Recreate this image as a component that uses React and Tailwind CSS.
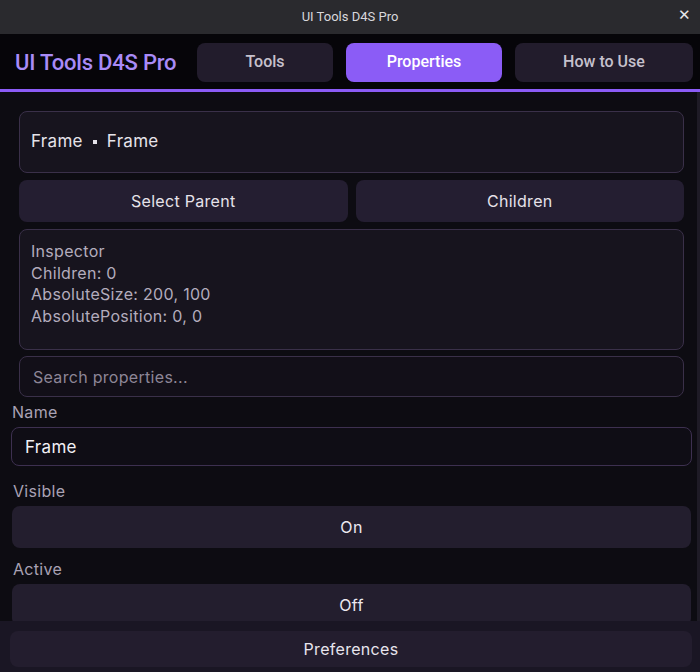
import React, { useState } from "react";

const tabs = ["Tools", "Properties", "How to Use"];

const inspectorLines = [
  "Inspector",
  "Children: 0",
  "AbsoluteSize: 200, 100",
  "AbsolutePosition: 0, 0",
];

const ToggleRow = ({ label, value, gap }) => (
  <>
    <div className={`h-[20px] shrink-0 ${gap} px-[13px] text-[16px] leading-[20px] text-[#a9a2b4]`}>{label}</div>
    <button className="mx-[12px] mr-[6px] mt-[5px] h-[42px] shrink-0 rounded-lg bg-[#231e2e] text-[16px] text-[#ece9f1]">
      {value}
    </button>
  </>
);

const App = () => {
  const [tab, setTab] = useState("Properties");
  const [name, setName] = useState("Frame");
  const [query, setQuery] = useState("");

  return (
    <div className="h-[672px] w-[700px] flex flex-col bg-[#0d0c12] overflow-hidden font-['Inter',sans-serif] tracking-[0.3px]">
      {/* window title bar */}
      <div className="h-[34px] shrink-0 relative flex items-center justify-center bg-[#2a2a2e] font-['Roboto',sans-serif] text-[13px] tracking-normal text-[#d8d8dc]">
        UI Tools D4S Pro
        <span className="absolute right-[9px] top-[8px] text-[15px] leading-none text-[#e6e6e8]">✕</span>
      </div>

      {/* header with tabs */}
      <div className="h-[58px] shrink-0 flex items-center pl-[15px] pr-[7px] pt-[1px] bg-[#060509] border-b-[3px] border-[#8b5cf6] tracking-normal">
        <div className="w-[182px] font-['Roboto',sans-serif] text-[22px] font-medium text-[#a98bf7] tracking-[-0.2px]">
          UI Tools D4S Pro
        </div>
        <div className="flex-1 flex gap-[13px] font-['Roboto',sans-serif] text-[16px] font-medium">
          {tabs.map((t) => (
            <button
              key={t}
              onClick={() => setTab(t)}
              className={`h-[39px] rounded-lg ${
                t === "Properties" ? "w-[156px] bg-[#8b5cf6] text-white" : "bg-[#221c2c] text-[#c6c1cd]"
              } ${t === "Tools" ? "w-[136px]" : ""} ${t === "How to Use" ? "flex-1" : ""}`}
            >
              {t}
            </button>
          ))}
        </div>
      </div>

      {/* scrolling properties list */}
      <div className="flex-1 min-h-0 flex flex-col overflow-hidden border-r-[3px] border-[#1e1b26]">
        <div className="mt-[19px] mx-[19px] mr-[13px] shrink-0 flex flex-col gap-[7px]">
          <div className="h-[62px] flex items-center gap-[10px] px-[11px] rounded-lg bg-[#17141e] border border-[#3a3049] text-[17px] text-[#e6e3ea]">
            <span>Frame</span>
            <span className="w-[4px] h-[4px] bg-[#e6e3ea]" />
            <span>Frame</span>
          </div>
          <div className="flex gap-[8px]">
            <button className="flex-1 h-[42px] rounded-lg bg-[#241e31] text-[16px] text-[#e6e3ea]">Select Parent</button>
            <button className="flex-1 h-[42px] rounded-lg bg-[#241e31] text-[16px] text-[#e6e3ea]">Children</button>
          </div>
          <div className="h-[121px] rounded-lg bg-[#17141e] border border-[#3a3049] px-[11px] pt-[11px] text-[16px] leading-[21.5px] text-[#b3acbd]">
            {inspectorLines.map((l) => (
              <div key={l}>{l}</div>
            ))}
          </div>
        </div>
        <input
          value={query}
          onChange={(e) => setQuery(e.target.value)}
          placeholder="Search properties..."
          className="mt-[6px] mx-[19px] mr-[13px] h-[41px] shrink-0 rounded-lg bg-[#120f18] border border-[#3a3049] px-[13px] text-[16px] text-[#e6e3ea] placeholder:text-[#8d8697] outline-none"
        />

        <div className="h-[20px] shrink-0 mt-[5px] px-[12px] text-[16px] leading-[20px] text-[#a9a2b4]">Name</div>
        <input
          value={name}
          onChange={(e) => setName(e.target.value)}
          className="mx-[11px] mr-[5px] mt-[5px] h-[39px] shrink-0 rounded-lg bg-[#0f0d15] border border-[#3d3050] px-[13px] text-[17px] text-[#f2f0f5] outline-none"
        />

        <ToggleRow label="Visible" value="On" gap="mt-[15px]" />
        <ToggleRow label="Active" value="Off" gap="mt-[11px]" />
      </div>

      {/* footer */}
      <div className="h-[51px] shrink-0 flex items-start pt-[10px] pl-[10px] pr-[8px] bg-[#1a1624]">
        <button className="w-full h-[36px] rounded-lg bg-[#231d2e] text-[16px] text-[#e8e5ed]">Preferences</button>
      </div>
    </div>
  );
};

export default App;
